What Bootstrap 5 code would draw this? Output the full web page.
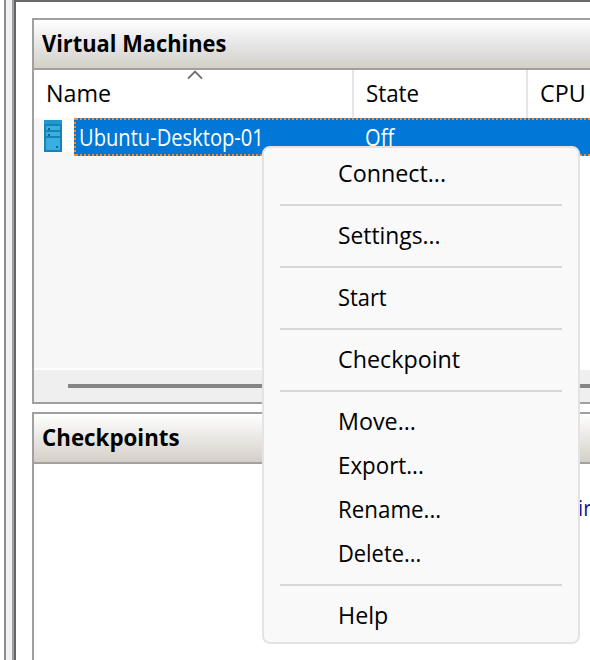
<!DOCTYPE html>
<html lang="en">
<head>
<meta charset="utf-8">
<title>Virtual Machines</title>
<link href="https://cdn.jsdelivr.net/npm/bootstrap@5.3.0/dist/css/bootstrap.min.css" rel="stylesheet">
<style>
body{width:590px;height:660px;font-family:"Open Sans","Noto Sans",sans-serif;font-size:24px;line-height:36px;color:#000;background:#fff}
.t{display:inline-block;white-space:nowrap;transform-origin:0 50%;transform:scaleX(.97)}
.t.n95{transform:scaleX(.95)}
.t.n93{transform:scaleX(.93)}
.t.n91{transform:scaleX(.91)}
.t.n86{transform:scaleX(.875)}
.edge-a{width:6px;border-right:2px solid #888c99}
.edge-b{width:6px;background:#f0f0f0}
.edge-c{width:2px;background:#a0a0a0}
.workspace{border-left:2px solid #646464;border-top:2px solid #696969;padding:16px 0 0 16px}
.pane{border:2px solid #a0a0a0;border-right:0}
.pane-vm{height:386px}
.pane-cp{border-bottom:0}
.pane-title{height:50px;border-bottom:2px solid #a0a0a0;background:linear-gradient(#fff,#e6e6e6 50%,#d4d0c8);font-weight:700;padding-left:8px;line-height:46px}
.pane-cp .pane-title{background:linear-gradient(#fff,#d4d0c8)}
.heads{height:48px}
.hcell{line-height:46px;border-right:2px solid #e5e5e5;padding-left:12px;flex:none}
.hname{width:320px}.hstate{width:174px}
.sort{left:153px;top:0}
.list{background:linear-gradient(90deg,#f7f7f7 320px,#fff 320px);height:250px}
.vmrow{height:38px}
.vmicon{width:30px;height:32px;margin:2px 0 0 10px;background:#fff}
.sel{height:38px;background:#0078d7;color:#fff}
.dots-h{height:2px;background:repeating-linear-gradient(90deg,#ff8728 0 2px,#0078d7 2px 4px)}
.dots-v{width:2px;background:repeating-linear-gradient(#ff8728 0 2px,#0078d7 2px 4px)}
.selbody{line-height:34px;font-size:23px}
.cell1{width:289px;padding-left:3px}
.sbar{height:34px;border-top:2px solid #fff;background:#efefef;padding:14px 0 0 34px}
.thumb{height:4px;background:#858585}
.menu{left:262px;top:146px;width:318px;height:498px;background:#f9f9f9;border:2px solid #e3e3e3;border-radius:8px;padding:4px 16px}
.menu .mi{height:44px;line-height:42px;padding-left:58px}
.menu .sep{height:2px;margin:8px 0;background:#d7d7d7}
.note{padding:26px 0 0 544px;font-size:21px;color:#14148c}
</style>
</head>
<body class="overflow-hidden position-relative d-flex">
<div class="edge-a flex-shrink-0"></div><div class="edge-b flex-shrink-0"></div><div class="edge-c flex-shrink-0"></div>
<main class="workspace flex-grow-1 d-flex flex-column gap-2 overflow-hidden">
<section class="pane pane-vm flex-shrink-0">
<div class="pane-title"><span class="t n91">Virtual Machines</span></div>
<div class="heads d-flex position-relative">
<div class="hcell hname"><span class="t">Name</span></div>
<div class="hcell hstate"><span class="t n93">State</span></div>
<div class="hcell border-0"><span class="t">CPU</span></div>
<svg class="sort position-absolute" width="16" height="10" fill="none" stroke="#707070" stroke-width="2"><path d="M1 8.6L8 1.6L15 8.6"/></svg>
</div>
<div class="list">
<div class="vmrow d-flex">
<div class="vmicon flex-shrink-0"><svg class="d-block" width="18" height="32" shape-rendering="crispEdges"><path fill="#1b9acb" d="M0 0h18v32H0z"/><path fill="#1683b3" d="M0 4h18v28H0z"/><path fill="#39aee2" d="M2 6h14v4H2zM2 12h14v4H2zM2 18h14v12H2z"/><path fill="#0b6796" d="M4 8h2v2H4zM4 14h2v2H4zM12 26h2v2h-2z"/></svg></div>
<div class="sel flex-grow-1 d-flex"><div class="dots-v flex-shrink-0"></div><div class="flex-grow-1"><div class="dots-h"></div><div class="selbody d-flex"><div class="cell1 flex-shrink-0"><span class="t n86">Ubuntu-Desktop-01</span></div><span class="t n86">Off</span></div><div class="dots-h"></div></div></div>
</div>
</div>
<div class="sbar"><div class="thumb"></div></div>
</section>
<section class="pane pane-cp flex-grow-1">
<div class="pane-title"><span class="t n93">Checkpoints</span></div>
<div class="note"><span class="t">ir</span></div>
</section>
</main>
<nav class="menu position-absolute">
<div class="mi"><span class="t">Connect...</span></div><div class="sep"></div>
<div class="mi"><span class="t n95">Settings...</span></div><div class="sep"></div>
<div class="mi"><span class="t n91">Start</span></div><div class="sep"></div>
<div class="mi"><span class="t">Checkpoint</span></div><div class="sep"></div>
<div class="mi"><span class="t">Move...</span></div>
<div class="mi"><span class="t n93">Export...</span></div>
<div class="mi"><span class="t n93">Rename...</span></div>
<div class="mi"><span class="t n91">Delete...</span></div><div class="sep"></div>
<div class="mi"><span class="t">Help</span></div>
</nav>
<script src="https://cdn.jsdelivr.net/npm/bootstrap@5.3.0/dist/js/bootstrap.bundle.min.js"></script>
</body>
</html>
